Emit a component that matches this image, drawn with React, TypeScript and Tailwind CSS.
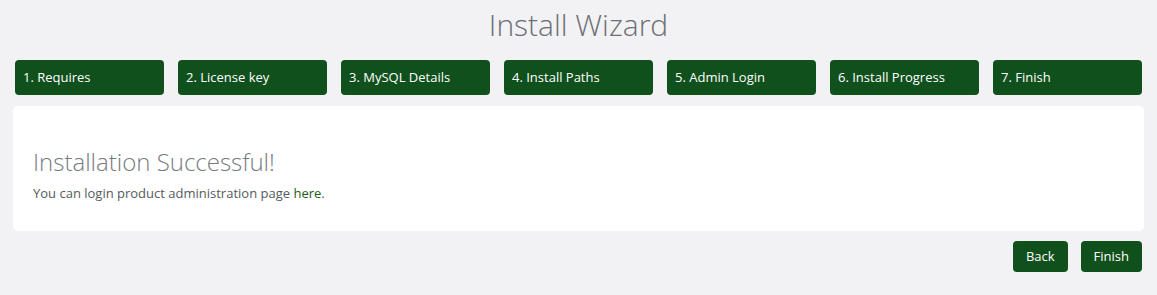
import React from 'react';

const steps = [
  '1. Requires',
  '2. License key',
  '3. MySQL Details',
  '4. Install Paths',
  '5. Admin Login',
  '6. Install Progress',
  '7. Finish',
];

const App: React.FC = () => {
  return (
    <div className="min-h-[295px] w-full bg-[#f2f2f4] font-['Open_Sans',sans-serif]">
      <h1 className="pt-[4px] text-center text-[30px] font-light leading-[42px] text-[#6b6f73]">Install Wizard</h1>

      <div className="mt-[14px] grid grid-cols-7 gap-[14px] px-[15px]">
        {steps.map((step) => (
          <div
            key={step}
            className="flex h-[35px] items-center rounded-[4px] bg-[#10501c] px-[8px] text-[13px] text-white"
          >
            {step}
          </div>
        ))}
      </div>

      <div className="mx-[13px] mt-[11px] h-[125px] rounded-[5px] bg-white px-[20px] pt-[40px]">
        <h2 className="text-[24px] font-light leading-[32px] text-[#777b7f]">Installation Successful!</h2>
        <p className="mt-[6px] text-[13px] text-[#555a5e]">
          You can login product administration page{' '}
          <a href="#" className="text-[#1c5a22]">here</a>.
        </p>
      </div>

      <div className="mt-[10px] flex justify-end gap-[13px] pr-[15px]">
        <button className="h-[31px] rounded-[4px] bg-[#10501c] px-[13px] text-[13px] text-white">Back</button>
        <button className="h-[31px] rounded-[4px] bg-[#10501c] px-[13px] text-[13px] text-white">Finish</button>
      </div>
    </div>
  );
};

export default App;
